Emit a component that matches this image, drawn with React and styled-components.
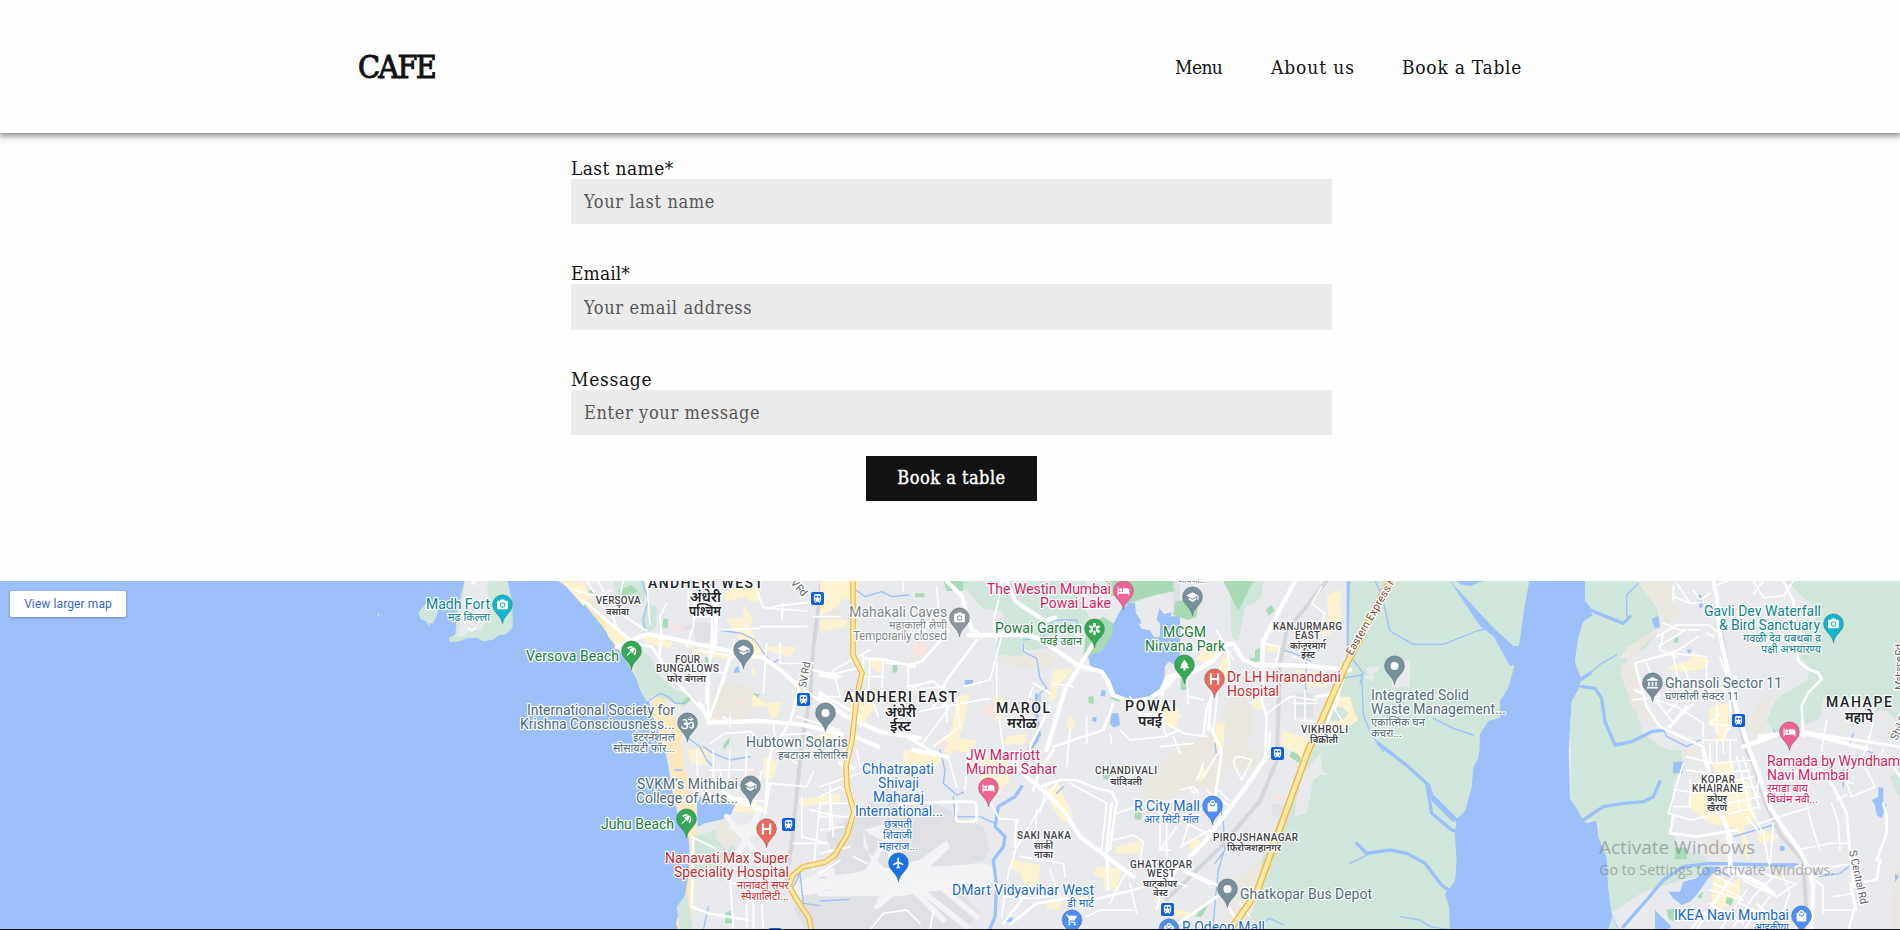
import React from "react";
import styled, { createGlobalStyle } from "styled-components";
import {
  MdCameraAlt, MdSchool, MdHotel, MdPark, MdFlight,
  MdShoppingCart, MdAccountBalance, MdBeachAccess, MdTrain, MdLocalMall,
} from "react-icons/md";
import { FaOm } from "react-icons/fa";

const GlobalStyle = createGlobalStyle`
  * { box-sizing: border-box; }
  html, body { margin: 0; padding: 0; overflow: hidden; background: #fefefe; }
`;

const slab = `"DejaVu Serif Condensed", "DejaVu Serif", "Liberation Serif", serif`;

const Page = styled.div`
  height: 930px;
  display: flex;
  flex-direction: column;
  overflow: hidden;
  background: #fefefe;
  font-family: ${slab};
  color: #111211;
`;

const Header = styled.header`
  flex: none;
  height: 133px;
  padding: 0 379px 0 358px;
  display: flex;
  align-items: center;
  justify-content: space-between;
  background: #fefefe;
  box-shadow: 0 2px 6px 1px rgba(17, 25, 20, 0.5);
`;

const Logo = styled.div`
  font-size: 32px;
  line-height: 40px;
  letter-spacing: -1.7px;
  -webkit-text-stroke: 1px #111211;
`;

const Nav = styled.nav`
  display: flex;
  gap: 48px;
`;

const NavLink = styled.a`
  width: ${(p) => p.$width}px;
  font-size: 19px;
  line-height: 26px;
  letter-spacing: ${(p) => p.$tracking}px;
  white-space: nowrap;
`;

const Form = styled.form`
  flex: none;
  width: 761px;
  height: 448px;
  margin-left: 571px;
  padding-top: 21.9px;
  display: flex;
  flex-direction: column;
`;

const Field = styled.label`
  display: flex;
  flex-direction: column;
  height: 105.55px;
  flex: none;
`;

const FieldName = styled.span`
  font-size: 19px;
  line-height: 26px;
  height: 24px;
  letter-spacing: ${(p) => p.$tracking}px;
`;

const Input = styled.input`
  height: 45.5px;
  width: 100%;
  padding: 0 13px;
  border: 0;
  background: #ebebeb;
  font: 18px ${slab};
  letter-spacing: 0.65px;
  &::placeholder { color: #565656; opacity: 1; }
`;

const Submit = styled.button`
  align-self: center;
  width: 171px;
  height: 45px;
  flex: none;
  margin-top: -15.55px;
  padding: 0 0 2px;
  border: 0;
  background: #111211;
  color: #fefefe;
  font: 18px ${slab};
  letter-spacing: 0.5px;
  -webkit-text-stroke: 0.4px #fefefe;
`;

const MapFrame = styled.section`
  position: relative;
  flex: none;
  height: 349px;
  overflow: hidden;
  border-bottom: 1px solid #1b1c22;
  background: #9cc0f9;
`;

const MapCanvas = styled.svg`
  display: block;
  width: 1900px;
  height: 349px;
`;

const LargerMap = styled.a`
  position: absolute;
  left: 10px;
  top: 10px;
  width: 116px;
  height: 26px;
  border-radius: 2px;
  background: #fff;
  box-shadow: 0 1px 3px rgba(0, 0, 0, 0.3);
  color: #3367d6;
  font: 12px/26px Roboto, sans-serif;
  letter-spacing: 0.1px;
  text-align: center;
`;

const Watermark = styled.div`
  position: absolute;
  left: 1599px;
  top: 253px;
  color: rgba(125, 128, 132, 0.62);
  font-family: "Open Sans", "Noto Sans", sans-serif;
  white-space: nowrap;
`;

const WatermarkTitle = styled.div`
  font-size: 19px;
  line-height: 26px;
`;

const WatermarkText = styled.div`
  font-size: 14.2px;
  line-height: 19px;
  letter-spacing: 0.08px;
`;

const MapLabel = styled.text`
  font-family: Roboto, "Noto Sans", "Noto Sans Devanagari", sans-serif;
  font-size: ${(p) => p.$size}px;
  font-weight: ${(p) => p.$weight};
  fill: ${(p) => p.$color};
  stroke: ${(p) => p.$halo};
  stroke-width: 2.6px;
  stroke-linejoin: round;
  paint-order: stroke;
`;

const Shape = styled.path`
  fill: ${(p) => p.$fill};
`;

const Line = styled.path`
  fill: none;
  stroke: ${(p) => p.$color};
  stroke-width: ${(p) => p.$width};
  stroke-linejoin: round;
  stroke-linecap: round;
`;

const FILLS = {
  marsh: "#d1e6da", park: "#a8dab5", sand: "#fef3d0", beach: "#fbe8bd",
  beige: "#ebe7e1", grey: "#dfe1e5", runway: "#f1f3f4", water: "#9cc0f9", pink: "#fae3e1", land: "#e8eaed",
};

const LINES = {
  stream: ["#9cc0f9", 4], creek: ["#9cc0f9", 10], rail: ["#d4d6d9", 12],
  apron: ["#f3f4f6", 17], minor: ["#fff", 5], road: ["#fff", 8], main: ["#fff", 13],
};

// Each sheet is a vertical slice of the city drawn at three units per pixel.
const SHEETS = [
  {
    x: 340,
    shapes: [
      ["marsh", "M235 128l22-27 38 0-2 30-15 30-8-2-2 10-10-15-15-7zM110 132l6-3 4 12-5-4zM373 33h130l15 70 0 70-20 20-20 2-18 14-30 5-20-10-30 0-20 10-30 2-4-12 20-10 5-70z"],
      ["land", "M376 33h65l5 70-20 80-30-5-25 22-20-2 10-40 5-60z"],
    ],
    lines: [["minor", "M395 33l8 10 5-10M385 175l10 8 12-8"]],
  },
  {
    x: 480,
    shapes: [
      ["beach", "M235 33l40 27 45 50 40 50 30 40 30 40 35 60 30 50 20 35 5-20-65-100-75-125-55-70-40-37zM515 430l20 50 30 80 15 100 15 50 30 70 5 60-5 80-10 60-15 40-12 40 7 20h30l12-50 12-190 0-110-15-60-25-100-5-80-50-100-25-30z"],
      ["marsh", "M400 33h95v60l-30 20-50-20zM500 100l30 10 0 60-30 20-20-40zM480 240l30 20 30 60 50 40 45 20-25 30-50-20-40-15-20 20-20-35-20-60zM635 800l110-30 25 80-55 70-70-20zM590 1010l30-40 20 110h-40z"],
      ["park", "M415 60l40-15 20 20-50 12zM310 68l25-8 5 12-25 8zM550 145l15 3-3 28-15-5zM675 260h22v20h-22zM605 395l22-18 10 10-22 18zM820 370l18 3-5 14-15-4zM730 525l20-25-4 22-15 18zM735 1030l22-10 0 40-22 0z"],
      ["sand", "M250 40l60-7 20 45-20 30zM370 150l65 40 20 40-30 20-40-50zM470 190l60 10 50 20-10 15-65-15zM580 210l60 20-5 30 25 10v-35l110 20-15 15-80-15zM740 145h75l-5 25 20 40 30 40-40 20-25-35zM720 75l70-35 55 10-10 50-50-20-40 15zM860 230h90l-20 30-60-15zM810 270l20 40-10 10zM805 360l50 40 50-5-15 50-20 0-5-35-45 0-15-30zM690 440l75-30 35 30-20 15-35-12-45 15zM620 540l60-10 5 55-50 0zM710 680l75 0 65 30-10 20-90-5-50 20zM790 100l30 50-20 20-10-30zM850 560l45 15-15 50-30 0zM955 690l125-20v25l-115 15zM1000 500l80-20v25l-85 25z"],
      ["beige", "M680 380l70-45 70 20-10 85-50 20-80-20zM720 750l90 30-70 60-35-40zM1020 90h60v60h-40z"],
      ["grey", "M600 170l75-15 25 10-15 55-35 0-10-45-25 5zM940 1020l70-90 70-20v170h-100z"],
      ["pink", "M580 160l25 10-5 15-20-5zM765 385h22v20h-22zM800 590l25 20-10 40-25-20zM850 800l30-10v30l-30 10z"],
      ["water", "M650 680l65 15 50 10-10 25-15 15-65 15-22 10zM695 145l15-5-3 30-10 5zM765 295l10-8 4 20-18 2z"],
      ["runway", "M740 770l130-18 60 20-60 30-100-10zM940 950l80-50 60-5v60l-90 20-40 0z"],
    ],
    lines: [
      ["stream", "M485 33l20 55-15 60 5 40M715 180l70 10 40 20 20 30 30 40 20-10M700 160l3 15M510 390l30-20 25 10 20 20 30 0M620 500l40 30 20 40 20 20M670 530l30 20 50 20 60-10M685 1010l-15 70M585 600l20 0M990 1050l5 30M940 950l20-40 10 90 70 10"],
      ["rail", "M1025 33l-25 200-10 150-25 140-10 100-20 200-20 130"],
      ["apron", "M740 740l90 110M840 720l-70 140"],
      ["minor", "M285 60l70 20 40-20M320 33l60 90M355 33l30 60 25 80 40 35M430 33l-20 90 90 60M500 33l10 130M620 230l20-60 5-80M640 140h80M545 210l-5-70 20-40M710 180l130-5M625 60v60M650 240l120 20M685 300l50 10-5 30M735 300l30-90M880 110l120-15M820 33l30 80 130 10M840 170h140M910 100l-5 50M860 220l-10 150M900 220v60h100M1000 140h80M760 460l-30-20 0 20M680 400l-5-100-20-10M690 520l45-30 80-5 10 35M880 460l10 80 60 40M750 470v-30M900 495l90-5 10 45M1030 430l50 100M950 440l130 40M870 640l110 10 20-45M650 540l5 150M700 540v100l120 20M750 540l-5 110M800 540l-5 140M690 600h130M720 600l15 60M845 600l-20 100M610 690l60-20 180 25M965 680v120l115 30M990 720l90 20M1020 700l-20 200M1050 650v190M940 820h130M635 800l40 20 60 30M750 920l10 160M820 960v120M750 940h80M635 850l5 50M800 1000v80M845 1000l5 80M690 900l60 30 50-10"],
      ["road", "M310 90l150 130 55 10 60 90 100 110M545 200l-8 60 30 50M685 300v150M760 240l-70 200M700 33l-5 190-10 110M855 730l10-150 20-80M870 640l-15 90M960 345l-30 110-60 100M1000 300l80 20M970 360l110 70M640 810l-5 200 50 20 120 20"],
      ["main", "M410 230l60-25 30-12 90 15 180 40 80 15 55 40 50 45M660 400l20 40M685 458l150-5 130 10 120 30M730 670l60 30 55 20M710 90l-5 125-15 50"],
    ],
  },
  {
    x: 820,
    shapes: [
      ["marsh", "M380 33h420l-20 60 30 50 10 30-20 10-30-10-10 30-60-30-15 60-60 10-60-50-20-70-60-10-40-50zM530 190l70 10 10 60-80-5z"],
      ["park", "M800 170l50-30 45 30-30 70-40 30-35-10zM860 33h220v20l-165 50-20-20-35-10zM285 70h28v12h-28zM218 286l14-5v24l-14 4zM805 380l15-3 2 25-16-3zM870 385l45-35 5 35-25 10zM370 33h60v30h-50zM150 1025l35 15 0 15-30 0zM850 610l18 2-3 18-15-3zM945 725l22 5-4 20-20-3z"],
      ["sand", "M0 33h110l10 45-50 10-30 30-40 20zM0 150h80v20l-80 15zM10 60l75-20-10 45-65 25zM150 260l40 10-10 40-20-10zM80 370l60-10 25 50-40 60-25-10zM410 380l40-10-20 100-40 90-20-20 30-80zM520 380l30 0-5 60-20 15zM700 300l60-5-50 60 0 30-25 10zM370 500l100 10-20 40-60-10zM560 500l60-10-5 30-65 5zM750 430l20 35-20 20-10-20zM480 560h80l10 70-50 60-40-60zM250 540l80 0 40 30-40 35-80-20zM680 660l35-20 45 100-30 20-40-60zM570 870l90 15-5 65-40-5-15-40-30-10zM830 890l75 5-15 60-35 5-5-35-30-10zM890 830l70-20 5 40-80 0zM300 740l35-5-5 40-20 15zM680 990l45 0-5 30-40-5zM1000 980l40 30 40 10v20l-60-10z"],
      ["beige", "M530 270l140-25 40 15-20 40-110-10zM970 640l60-60 50-10v100l-60 30-50 0zM300 185l25 60-60 40z"],
      ["grey", "M160 690l90-20 80 20 160 80 20 70-20 30-160 50-200-20-80 30-30-140zM0 920h380l100 110-60 60H0zM1060 33h20v90h-20z"],
      ["runway", "M130 780l70-20 30 30-20 100 90-20 80-60 10 20-60 60 160-10 30 10 10 60-120 20-40-10-170 20-180-20v-40l140-20zM130 780l0 50 80 80-10-90z"],
      ["pink", "M285 215l40 20-15 25-35-10zM490 405h28v35l-28-5zM360 500l25 20-10 20-20-10z"],
      ["water", "M905 115l12-5 8-12 20 0 3 32 14 20 3 25 25 5 12 22 18-2 8-30-18-20 8-35 20 25 42-2V260l-50 70-10 35-20 12-40 11-45-2-35-10-15-40-20-30-35-20-5-30 40-10 30-50 5-35zM875 430l20 0 5 35-18 8-12-12zM845 360l13 2-4 18-12-3zM818 442l12 0-2 14-12-3zM434 330h25v14h-25zM552 1045l28-3-5 13-18 2z"],
      ["land", "M955 160l25 5 10 15-25-3zM1035 275l15 0 20 15 10 25h-35l-12 20z"],
    ],
    lines: [
      ["stream", "M95 50l40 30 50-15 30 15 50-5M610 210l60-10 30-50 70 0 10 40M610 220l0 25 40 20 10 60 20 30-20 15 0 25M640 520l-15 30 30-40M360 540l15 60-5 40 40 35 20-8M400 680l5 60h70M480 740l45 20M0 993l90-5M730 650l-20 20"],
      ["creek", "M650 375l0 60 8 60-30 40M605 650l-20 30-50 30-10 60 30 30-5 30-30 40 10 80-5 90-25 60"],
      ["apron", "M0 935h180l330 15 30 0M0 970h250l240-60M180 990l170-130 30-30M190 800l100 150 150 120M350 940l120 100M130 930l70-130M170 1010l130-110M290 970l80 80M0 955l160-55 150 10"],
      ["minor", "M350 50l5 60-60 100M250 33v30M550 33l-30 120 10 60M0 310h50l80-20M0 380l60 0-20-80 110-60M130 250v70l60 0M150 270l-5 90 30 80M190 265l-5 100M130 420l-40-50M200 280l65 5 0 90M260 350l80-15 40 30 0 90M240 380v60M270 430l100-20 20-30M270 360l100-10M375 340l-5 70 140-25M430 350l80-20 40-150M530 280v100l20 160M410 390l10 80-80 60M340 330l-80 30M640 350l-40 100M300 530l90-120M640 340l50 30M700 340l60 10M800 440l0 80M870 490l5 30M900 480l30 30 100-10 50-20M930 380l30 50 120 10M1020 440l20 60M750 480l-10 110M410 650l-25-90M435 660l10-120M480 640l60 110M540 745l55 5M710 640l-60 90-70 120M750 640l110 60M680 650l-20 80M860 700l-15 140-20-5M890 730l90-30 100-10M880 810l60-15 30 20-10 60M870 1000l40-80 30-30M600 860l130 20 5 40M690 900l30 80M585 850l-20 60-20 130M550 980l90 5 80-10M650 720l-5 100M1020 720v120l50-70M0 680l60-30 40 30M0 700h80M0 740h100M0 780l70-10M30 660l10 140M0 850l90-20M100 860l40 20M0 910l60-40M1040 900l-30 120M800 1040l40-20 100 0M930 940l20 90M150 1080l40-50 70-10 40 40M330 1080l10-60M0 650l120-40M110 540l10 50"],
      ["road", "M135 265l60 5 70 15 40-10 80-90M0 315l50 10M265 290l20 0M340 410l40-80 90-120M0 380l80 60 40 0M0 370l90 50M130 465l60 20M260 500l70 40 50 20M690 410l-60 120 0 20M240 700l170-5M410 695h45q15 0 15 15v30q0 15-15 15h-35q-12 0-12-15zM700 540l-40 60-20 60M590 750l-5 80M575 1060l75-60 90-15 100 0 100-25 60-20M865 960l-5-120 15-140M660 650l60-20 50 0 60 25 45 10 15 30-20 140-20 20M880 400l-30 80-150 50M620 970l-70 90"],
      ["main", "M380 33l45 45 30 100 30 20M445 195h170l40 10 120 80M820 220l-85 140-55 180M765 285l80 20 20 30 15 40 50 20 60-10 50-35 20-25M540 540l80 80 60 50 50 50 50 80 40 30 80 60 40 30M560 33l25 60 90 60 30-10M0 380l80 60 100 45 120 20M380 560l-100-20M60 580l40 15M550 33l-30 20M0 370l30 20M105 500l70 30"],
    ],
  },
  {
    x: 1160,
    shapes: [
      ["marsh", "M210 33h100l-5 50-50 30-20 100-20-10zM570 33H1108l-15 80-15 110-18 20 2 50-17 60-25 40 0 50-35 10-25 40-2 50-3 20-15 30-5 60-20 70-25 25-5 45 5 80-5 60-15 20-15 20 13 40 2 80H210l70-70 20-140 55-130 70-165 50-130 90-200z"],
      ["park", "M0 33h25l20 30-45 10zM45 95l70-15-5 60-25 10-45-15zM190 33h90l-20 40-25 50-20-40zM318 120l15-15 12 15-18 18zM285 240l15-8v40l-30 8v-15l15 0zM62 325l20-5v40h-20zM395 540l32 0-8 40-30-20zM150 580l20-15-8 60-20 5zM115 1025l30-20-20 35-18 0zM290 400v-10l12 0z"],
      ["beige", "M220 370l40 20 20 60-20 120-60 30-30 60-170 10v-90l80-70 70-10zM0 620l60-10-30 60-30 20zM220 930l85-60 0 90-50 90-60 20zM200 540l90 0 0 50-60 20z"],
      ["sand", "M500 75l45-15-5 30 5 50-20 40-30 20-20-30 15-20 15-5zM180 280l25-30 10 40-20 40-20 5zM320 220l35 0v25l-35 0zM530 380l40 0 10 40 15 30-70 45-20-10 5-30 40-5 15-20-20-20-15 0zM410 300l100 10-10 40-60 0zM170 460l25 0-5 70-10 20-20-30zM275 380l35 5-5 35-25-5zM370 480l80 30-10 70-30-30-50-20zM130 590l10 20-20 30-10-20zM85 800l35 10-10 35-20-8zM15 1010l90 20-20 10-70-10zM0 400l60 20-10 60-50-20zM130 230l40 10-20 40-40-10z"],
      ["grey", "M335 700l60 10-20 35-40-10zM400 370h60v70h-60z"],
      ["land", "M620 295l40-8-8 20 -30 5zM610 320l30-10v25zM695 275l55-5v80l-55 5zM430 610l50-60 10 60-30 20-20 100-35 10 5-60zM480 600l30 15-30 0z"],
      ["water", "M870 33l130 140 60 55 30 0-10 50-30 10-50-90-40-30zM0 135l35-8-8 35 18 20-5 75-40 50zM890 33l80 0-40 15-30-5z"],
      ["pink", "M180 240l20 0-5 20-15-5zM345 680l12-12 8 20-20 5z"],
    ],
    lines: [
      ["stream", "M645 33l20 40 25 110 70 40 90 0 100-40 50-10M600 340l10-30-30-40M545 325l60-10 5 120 20 50 40 60M360 235l80 30 30 30M440 260l-5 160M165 880l30-40-5-80-10-60M190 850l-15 50-10 100-5 60 20 20M820 445l60 30 60 20M570 880l60-30M720 1040l60 10 30 20 50 8M300 1060l30-15 40 20M165 520l5 40"],
      ["creek", "M655 520l90 70 60 55 15 45 60 60M820 680l80 80M590 820l30 30 70-10 50 10 55 30 50 65 20 15M800 640l15 90 60 50 20 5"],
      ["rail", "M500 33l-120 150-20 100-10 290-50 120-120 140-160 155"],
      ["minor", "M485 50l-30 50 40 30-20 60M310 220l50 10-15 60M400 260l80 30M320 430l70-50 80 10M405 375v75l70 5M435 360v90M400 400h70M540 360l-15 60 20 30M0 450l70 40 70 10M90 380l40 10M80 320l5 80M170 180l50 90M180 290l-20 200M200 220l10 80M110 630l10-20 10-30M60 660l40-10 15 20M225 590q-15-30 20-30l30 10-30 60zM90 650l10 20 15-10M155 700l-60 30-30 100M80 760l100 50M60 830l90-50M0 760l20-10v120l-20 0M0 840h30M0 910l80 40M140 660l20 20M130 620l50-80M205 690l-30-30M270 1040l-30-40M60 550l-20-50M0 530l100-10"],
      ["road", "M305 210l5 90-5 90 15 50-5 130M130 495l10-80 20-50M145 460l40 80-10 80-10 60 50 30M70 900l50 20 60 30M310 280l30 10M100 310l60-35 45-55M205 1010l30 50M55 1060l130-90M160 300l-15 180M325 540l5-50M0 400l20-80 70 0M550 330l-60 160M470 380l55-10"],
      ["main", "M405 33l-95 180-5 80M0 370l20-45 80-20 60-35 40-45 20-5 30 50 40 15 80 0 100 5 100 10M320 560l-70 100-120 160-90 90-40 20M70 900l80 40M30 320l75-20"],
    ],
  },
  {
    x: 1530,
    shapes: [
      ["land", "M165 33H1110V1080H285l-20-5-20-45-10-80-5-90-25-60-5-50-30 10-50-75-2-80-2-60 4-70 5-80 25-45v-35l-15-40 10-70 15-50 30-20-25-30z"],
      ["marsh", "M165 33h155l60 80 10 60-40 60-50 30-30 40 20 60 30 60 20 70 60 40 55 20v50l-100 0H123L120 475 125 395 150 350V315L135 275 145 205 160 155 190 135 165 105zM123 540H455l-5 60-20 40-10 130 30 70 80 20-5 55-85 20-100 30-90 60L235 1080H265L245 1030 235 950 230 860 205 800 207 760 185 750 162 757 122 680z"],
      ["marsh", "M770 33h340v430l-40-40-30 0-50-40-110 0-10 60-60 30-70 20-30-40 30-70 90-50 10-40-40-40 30-80 50-50-60-40zM1080 620l30-30v100z"],
      ["beige", "M325 33h100l0 60 30 40-60 40-60 60-30 40-35-10 20-30 80-50 30-50zM270 280l45 0 40 140 50 60-40-10-60-60zM690 390l50-20-30 70-10 60-50-20zM455 540h70l-60 30zM530 800l60 20 5 60-65-20zM720 880h60l-10 60-30-20zM1100 820l10 120v150h-30z"],
      ["sand", "M410 290l70-20 10-25 40 20 0 30-60 10-60-5zM540 410l55-10 0 70-10 50-20-10-5-35-25-10zM550 580l60-10 0 50 50 20 10 120-50 15-90-20-60-50 20-40 20-20 50 0zM640 760l20 110-15-10-10-60-20-20zM700 780l50 20-50 25-20-20zM550 910l60 30 20-20 0 60-70 50-15-20zM530 650l60-20 60 30 30 80-70 30-80-10z"],
      ["park", "M435 205l10-3v14l-15 3zM545 320l15-5-5 12zM435 833h35v35h-35zM590 980l22 8-10 20-15-8zM505 975l15-10-5 18-12 3zM410 1020l30-5-10 40-15-10z"],
      ["water", "M365 148l20-12 5 35-15 5zM502 75l12 0 5 35-10 5zM468 238l18 2-8 12zM430 575l32 0-5 35-28 0zM1025 690l20-10 0-30 15 5 0 40 10 10-15 40-15-10-5-30zM750 828l14 0 0 14h-14zM415 965l35 0 10-30 40-10 30-35 40 0-35 35-35 50-20 20-25 10-25-20zM375 1020l50 50-50 30zM1095 910l12 10-12 15z"],
    ],
    lines: [
      ["stream", "M325 40l-35 35 0 55 5 20M155 330l60-50 45-25M400 480l10 20 60 30 40-20M610 800l120-35M840 900l30 20 60-10 40-30M970 490l-10 30 70 30M940 600l0 50M730 480l15 20M540 890l60 30"],
      ["creek", "M165 100l15 20 50 20 50 20 20-20M150 330l30-20M155 350l40 5 20 30 10 70 30 70 50-10 60-30 40-5M160 750l60-40 60-10 60-5 30-15 20-45M280 1070l70-80 50-60 60-40 80-10 180 5 80 0"],
      ["rail", "M550 33l20 120 40 250 40 140 20 40 30 100 50 110 70 80 10 170"],
      ["minor", "M430 90l0-40M400 160l50 20 60 0M430 80l50 20 60-5M480 100l-40-60M490 60l20 30 30-20M350 270l80-20 100 10M350 280l40 100-80 10M315 280l130-40 60-40M400 190l-10 50 50 20M380 200l60-35 100 0 20 20M465 180l-80 50M530 190l20 10M430 260l20 90M530 270l0 90 70-10M460 290l30 70M570 260l20 60M380 390l60 20 80 50 0 60M410 430l60-60 90-30 60-20M370 380l60 80M430 460l60-60M560 45l40-15M670 33l30 50 60-5 30-45M700 33l-30 40M460 580l-45 150 70 20 110-30M470 560l80 20M470 600l70 10M440 660l60 10 60-10M430 710h50v-80M520 510h100M540 520v60M560 510v70M580 510v40M600 510v60M580 500l30-50M560 580l110-10M570 610l90-10M560 640l110-20M580 660l100-10M590 700l100-20M600 730l90-20M600 560l30 160M620 560l40 150M640 560l50 160M570 430l-30 30 80 10M560 400v90M600 390v90M650 700l50 90 20 110M690 760l90-30 70-20M730 760l-10 130M650 740l40 50M690 600l-10 80M800 600l50 180 20 60M800 840l100-20 60 0M870 610l100 30M905 700l20 60 5 80M920 690l30-15M950 640l15 40 70-30-30-60M890 450l-15 90 10 30M1030 460l-30 100M1060 540l-30 40M860 920l50-30 60-10M820 900l60 50 0 80M910 980l60-10 10 50M880 1020h90M620 900l-60 90-80 90M590 940l-90 140M650 960l-80 120M640 930l100 50 60-40M730 920l-60 60-60 90M700 910l90 30M550 940l80 40M540 960l100 30M560 920l60 30M680 1000l60 60M720 980l-80 100M500 1020l60 30M760 920l20 50-30 80M630 1000l60 30M540 1000l100 60"],
      ["road", "M315 280l35 130 40 60 130 60M315 360l20 10M420 470l50-60M415 470l15-10M760 33l30 60 15 180 30 25 30 10 10 20-40 40-20 40 5 90M800 480l-10 20M590 800l15 90-10 20M430 740l-10 50 80 10 120-20M690 500l130-15 90 15 200 30M870 600l40 50 40 80 10 120 10 100M960 940l15 70-20 70M970 940l70-10 10-60M1040 870l30-80 0-50-10-40M1110 620l-20-30M800 890l100 0"],
      ["main", "M550 33l10 50 10 110 50 230 40 120 30 80 30 90 40 60 50 70 30 60 10 50-10 170M800 487l60 10 150 40M690 500l110-15M600 900l90 40 40 30M640 530l100-35M520 540l30 120 50 140 0 90"],
    ],
  },
];

const INK = {
  teal: "#0c8591", green: "#188038", slate: "#526c7a", red: "#d3282c", gray: "#7f868c",
  pink: "#e0185f", blue: "#1769d5", area: "#3f4347", city: "#202327", road: "#5f6368",
};

// text, left, right, baseline, ink, size, weight
const LABELS = [
  ["Madh Fort", 426, 490, 609.3, "teal", 14],
  ["मढ किल्ला", 448, 490, 620.5, "teal", 11.5],
  ["VERSOVA", 595.7, 640.7, 604, "area", 10, 500],
  ["वर्सोवा", 606, 629, 614, "area", 10, 500],
  ["ANDHERI WEST", 648, 763, 587.7, "city", 14, 500],
  ["अंधेरी", 690, 721, 601.5, "city", 14, 600],
  ["पश्चिम", 689, 721, 615.5, "city", 14, 600],
  ["Versova Beach", 526, 619, 661, "green", 14],
  ["FOUR", 675, 700, 663, "area", 10, 500],
  ["BUNGALOWS", 656, 719, 672, "area", 10, 500],
  ["फोर बंगला", 667, 706, 681, "area", 10, 500],
  ["International Society for", 527, 675, 715, "slate", 14],
  ["Krishna Consciousness...", 520, 675, 729, "slate", 14],
  ["इंटरनॅशनल", 633, 675, 740, "slate", 11.5],
  ["सोसायटी फॉर...", 613, 675, 751, "slate", 11.5],
  ["Hubtown Solaris", 746, 848, 747, "slate", 14],
  ["हबटाउन सोलारिस", 778, 848, 758, "slate", 11.5],
  ["SVKM's Mithibai", 637, 738, 788.7, "slate", 14],
  ["College of Arts...", 636, 738, 803, "slate", 14],
  ["Juhu Beach", 601, 674, 829, "green", 14],
  ["Nanavati Max Super", 665, 789, 863, "red", 14],
  ["Speciality Hospital", 674, 789, 877, "red", 14],
  ["नानावटी सुपर", 737, 789, 888, "red", 11.5],
  ["स्पेशालिटी...", 741, 789, 899, "red", 11.5],
  ["Mahakali Caves", 849.2, 947.2, 617, "gray", 14],
  ["महाकाली लेणी", 889, 947, 628, "gray", 11.5],
  ["Temporarily closed", 853, 947, 640, "gray", 12],
  ["ANDHERI EAST", 844, 957, 702, "city", 14, 500],
  ["अंधेरी", 885, 916, 716, "city", 14, 600],
  ["ईस्ट", 890, 911, 730, "city", 14, 600],
  ["The Westin Mumbai", 987, 1111, 594, "pink", 14],
  ["Powai Lake", 1040, 1111, 608, "pink", 14],
  ["Powai Garden", 995, 1082, 633, "green", 14],
  ["पवई उद्यान", 1040, 1082, 644, "green", 11.5],
  ["MAROL", 996, 1050, 713, "city", 14, 500],
  ["मरोळ", 1007, 1037, 727, "city", 14, 600],
  ["POWAI", 1125, 1176, 711, "city", 14, 500],
  ["पवई", 1138, 1162, 725, "city", 14, 600],
  ["MCGM", 1163, 1206, 636.5, "green", 14],
  ["Nirvana Park", 1145, 1225, 651, "green", 14],
  ["Chhatrapati", 862, 934, 774, "blue", 14],
  ["Shivaji", 878, 919, 788, "blue", 14],
  ["Maharaj", 873, 924, 802, "blue", 14],
  ["International...", 855, 943, 816, "blue", 14],
  ["छत्रपती", 884, 912, 827, "blue", 11.5],
  ["शिवाजी", 883, 912, 838, "blue", 11.5],
  ["महाराज...", 879, 918, 849, "blue", 11.5],
  ["JW Marriott", 966, 1040, 760, "pink", 14],
  ["Mumbai Sahar", 966, 1057, 774, "pink", 14],
  ["CHANDIVALI", 1095, 1157, 774, "area", 10, 500],
  ["चांदिवली", 1110, 1142, 784, "area", 10, 500],
  ["SAKI NAKA", 1017, 1071, 839, "area", 10, 500],
  ["साकी", 1034, 1053, 848, "area", 10, 500],
  ["नाका", 1034, 1053, 857, "area", 10, 500],
  ["GHATKOPAR", 1130, 1192, 868, "area", 10, 500],
  ["WEST", 1147, 1175, 877, "area", 10, 500],
  ["घाटकोपर", 1143, 1177, 886, "area", 10, 500],
  ["वेस्ट", 1153, 1168, 895, "area", 10, 500],
  ["DMart Vidyavihar West", 952, 1094, 895, "blue", 14],
  ["डी मार्ट", 1067, 1094, 906, "blue", 11.5],
  ["R City Mall", 1134, 1200, 811, "blue", 14],
  ["आर सिटी मॉल", 1144, 1199, 822, "blue", 11.5],
  ["आयआ...", 1178, 1206, 582, "slate", 11.5],
  ["Dr LH Hiranandani", 1227, 1341, 682, "red", 14],
  ["Hospital", 1227, 1279, 696, "red", 14],
  ["KANJURMARG", 1273, 1342, 630, "area", 10, 500],
  ["EAST", 1295, 1320, 639, "area", 10, 500],
  ["कांजूरमार्ग", 1290, 1326, 648, "area", 10, 500],
  ["ईस्ट", 1301, 1315, 657.5, "area", 10, 500],
  ["VIKHROLI", 1301, 1348, 733, "area", 10, 500],
  ["विक्रोली", 1310, 1338, 742.5, "area", 10, 500],
  ["Integrated Solid", 1371, 1469, 700, "slate", 14],
  ["Waste Management...", 1371, 1506, 714, "slate", 14],
  ["एकात्मिक घन", 1371, 1425, 725, "slate", 11.5],
  ["कचरा...", 1371, 1402, 736, "slate", 11.5],
  ["PIROJSHANAGAR", 1213, 1298, 841, "area", 10, 500],
  ["फिरोजशहानगर", 1227, 1281, 850.5, "area", 10, 500],
  ["Ghatkopar Bus Depot", 1240, 1372, 899, "slate", 14],
  ["R Odeon Mall", 1182, 1265, 932, "blue", 14],
  ["Gavli Dev Waterfall", 1704, 1821, 616, "teal", 14],
  ["& Bird Sanctuary", 1719, 1820, 630, "teal", 14],
  ["गवळी देव धबधबा व", 1743, 1821, 641, "teal", 11.5],
  ["पक्षी अभयारण्य", 1761, 1821, 652, "teal", 11.5],
  ["Ghansoli Sector 11", 1665, 1782, 688, "slate", 14],
  ["घणसोली सेक्टर 11", 1665, 1739, 699, "slate", 11.5],
  ["MAHAPE", 1826, 1892, 707, "city", 14, 500],
  ["महापे", 1845, 1873, 721, "city", 14, 600],
  ["Ramada by Wyndham", 1767, 1900, 766, "pink", 14],
  ["Navi Mumbai", 1767, 1849, 780, "pink", 14],
  ["रमाडा बाय", 1767, 1808, 791, "pink", 11.5],
  ["विंध्यंम नवी...", 1767, 1818, 802, "pink", 11.5],
  ["KOPAR", 1701, 1735, 783, "area", 10, 500],
  ["KHAIRANE", 1692, 1743, 792, "area", 10, 500],
  ["कोपर", 1707, 1727, 801, "area", 10, 500],
  ["खैरणे", 1707, 1727, 810, "area", 10, 500],
  ["IKEA Navi Mumbai", 1674, 1789, 920, "blue", 14],
  ["आइकीया", 1754, 1789, 930.5, "blue", 11.5],
];

const isLatin = (text) => /[A-Za-z]/.test(text);

// The regional names sit under the Latin ones, so they are painted first.
const ORDERED_LABELS = [
  ...LABELS.filter(([text]) => !isLatin(text)),
  ...LABELS.filter(([text]) => isLatin(text)),
];

// text, x, y, rotation, length, color
const ROAD_NAMES = [
  ["V Rd", 790, 583, 48, 19, "#5f6368"],
  ["SV Rd", 806, 688, -80, 26, "#5f6368"],
  ["Eastern Express H", 1352, 656, -60, 89, "#7a4a2a"],
  ["S Central Rd", 1849, 851, 78, 55, "#5f6368"],
  ["Shil Phata Rd", 1897, 741, -66, 62, "#5f6368"],
  ["Mahape Rd", 1903, 690, -90, 46, "#5f6368"],
];

// x and y of the tip, color, glyph
const PINS = [
  [502.5, 624, "#12b5cb", "camera"], [631.5, 670, "#34a853", "beach"], [743.5, 669, "#78909c", "school"],
  [687.5, 742, "#78909c", "om"], [825.5, 732, "#78909c", "dot"], [750.5, 805, "#78909c", "school"],
  [686.5, 838, "#34a853", "beach"], [766.5, 848, "#ee675c", "hospital"], [959.5, 637, "#8f959b", "camera"],
  [1123.5, 610, "#f06292", "bed"], [1094.5, 648, "#34a853", "flower"], [1184.5, 684, "#34a853", "tree"],
  [1214.5, 698, "#ee675c", "hospital"], [1192.5, 616, "#78909c", "school"], [898.5, 882, "#1a73e8", "plane"],
  [988.5, 807, "#f06292", "bed"], [1072, 939, "#4c8df6", "cart"], [1212.5, 825, "#4c8df6", "bag"],
  [1169, 948, "#4c8df6", "bag"], [1227.5, 908, "#78909c", "dot"], [1394.5, 685, "#78909c", "dot"],
  [1833.5, 643, "#12b5cb", "camera"], [1652.5, 702, "#78909c", "museum"], [1789.5, 751, "#f06292", "bed"],
  [1801.5, 935, "#4c8df6", "bag"],
];

const STATIONS = [[817.5, 598.5], [803.5, 699.5], [788.5, 824.5], [1277.5, 753.5], [1167.5, 909.5], [1738.5, 720.5], [775, 934.5]];

const GLYPHS = {
  camera: MdCameraAlt, school: MdSchool, om: FaOm, bed: MdHotel,
  tree: MdPark, plane: MdFlight, cart: MdShoppingCart, bag: MdLocalMall, museum: MdAccountBalance,
};

function Pin({ x, y, color, glyph }) {
  const Glyph = GLYPHS[glyph];
  return (
    <g transform={`translate(${x} ${y})`}>
      <path d="M0 0C-1-6-4-8-7-12A10 10 0 1 1 7-12C4-8 1-6 0 0Z" fill={color} stroke="#3c4c57" strokeOpacity=".45" strokeWidth=".7" />
      {glyph === "dot" && <circle cy="-19" r="4" fill="#fff" />}
      {glyph === "hospital" && <path d="M-3.6-24.5v11M3.6-24.5v11M-3.6-19h7.2" stroke="#fff" strokeWidth="2.2" />}
      {glyph === "flower" && [0, 60, 120, 180, 240, 300].map((turn) => (
        <ellipse key={turn} cx="0" cy="-3.9" rx="1.5" ry="2.3" fill="#fff" transform={`translate(0 -19) rotate(${turn})`} />
      ))}
      {glyph === "beach" && (
        <g transform="scale(-1 1)">
          <MdBeachAccess x={-6.5} y={-25.5} size={13} color="#fff" />
        </g>
      )}
      {Glyph && <Glyph x={-6.5} y={-25.5} size={13} color="#fff" />}
    </g>
  );
}

function Station({ x, y }) {
  return (
    <g transform={`translate(${x} ${y})`}>
      <rect x="-6.5" y="-6.5" width="13" height="13" rx="2" fill="#0f5fe0" />
      <MdTrain x={-5.5} y={-5.5} size={11} color="#fff" />
    </g>
  );
}

function CityMap() {
  return (
    <MapCanvas viewBox="0 581 1900 349">
      <g transform="translate(480 570) scale(.33333)">
        <Shape $fill={FILLS.land} d="M235 33l40 27 45 50 40 50 30 40 30 40 35 60 30 50 20 35 10 45 15 40 15 40 10 30 10 50 10 60 10 50 15 60 25 40 5 60-5 60-10 60-15 40-12 40 7 20H2600V33Z" />
      </g>
      {SHEETS.map((sheet) => (
        <g key={sheet.x} transform={`translate(${sheet.x} 570) scale(.33333)`}>
          {sheet.x === 1160 && <Shape $fill={FILLS.water} d="M1108 33l-15 80-15 110-18 20 2 50-17 60-25 40 0 50-35 10-25 40-2 50-3 20-15 30-5 60-20 70-25 25-5 45 5 80-5 60-15 20-15 20 13 40 2 80H1500V33z" />}
          {sheet.shapes.map(([kind, d], i) => <Shape key={i} $fill={FILLS[kind]} d={d} />)}
          {sheet.lines.map(([kind, d], i) => <Line key={i} $color={LINES[kind][0]} $width={LINES[kind][1]} d={d} />)}
        </g>
      ))}
      {["#f5b32f", "#fde9ae"].map((color, i) => (
        <g key={color}>
          <Line $color={color} $width={i ? 3.4 : 5.6} d="M853 581V655l9 18-5 22-5 45-6 25 1 22 7 25-7 23-12 20-10 7-22 5-10 8-4 11 8 14 12 18 3 15" />
          <Line $color={color} $width={i ? 4.4 : 7} d="M1392 577L1346 665 1308 751 1258 889 1248 905 1230 930" />
        </g>
      ))}
      {ROAD_NAMES.map(([text, x, y, angle, length, color]) => (
        <MapLabel key={text} $size={11} $weight={400} $color={color} $halo="#fff" textLength={length} transform={`translate(${x} ${y}) rotate(${angle})`}>{text}</MapLabel>
      ))}
      {STATIONS.map(([x, y]) => <Station key={x} x={x} y={y} />)}
      {PINS.map(([x, y, color, glyph]) => <Pin key={`${x}-${y}`} x={x} y={y} color={color} glyph={glyph} />)}
      {ORDERED_LABELS.map(([text, left, right, y, ink, size, weight = 400]) => (
        <MapLabel
          key={`${text}-${left}`}
          x={left}
          y={isLatin(text) ? y : y + 0.7}
          textLength={right - left}
          lengthAdjust={isLatin(text) ? "spacing" : "spacingAndGlyphs"}
          $size={size}
          $weight={weight === 500 && size === 10 && !isLatin(text) ? 600 : weight}
          $color={INK[ink]}
          $halo="rgba(255,255,255,.92)"
        >
          {text}
        </MapLabel>
      ))}
    </MapCanvas>
  );
}

// name, hint, tracking of the name
const FIELDS = [
  ["Last name*", "Your last name", 0.4],
  ["Email*", "Your email address", 0.1],
  ["Message", "Enter your message", 0.7],
];

export default function App() {
  return (
    <Page>
      <GlobalStyle />
      <Header>
        <Logo>CAFE</Logo>
        <Nav>
          <NavLink $width={48} $tracking={-0.6}>Menu</NavLink>
          <NavLink $width={83} $tracking={0.9}>About us</NavLink>
          <NavLink $width={119} $tracking={0.75}>Book a Table</NavLink>
        </Nav>
      </Header>
      <Form>
        {FIELDS.map(([name, hint, tracking]) => (
          <Field key={name}>
            <FieldName $tracking={tracking}>{name}</FieldName>
            <Input placeholder={hint} />
          </Field>
        ))}
        <Submit type="button">Book a table</Submit>
      </Form>
      <MapFrame>
        <CityMap />
        <LargerMap>View larger map</LargerMap>
        <Watermark>
          <WatermarkTitle>Activate Windows</WatermarkTitle>
          <WatermarkText>Go to Settings to activate Windows.</WatermarkText>
        </Watermark>
      </MapFrame>
    </Page>
  );
}
